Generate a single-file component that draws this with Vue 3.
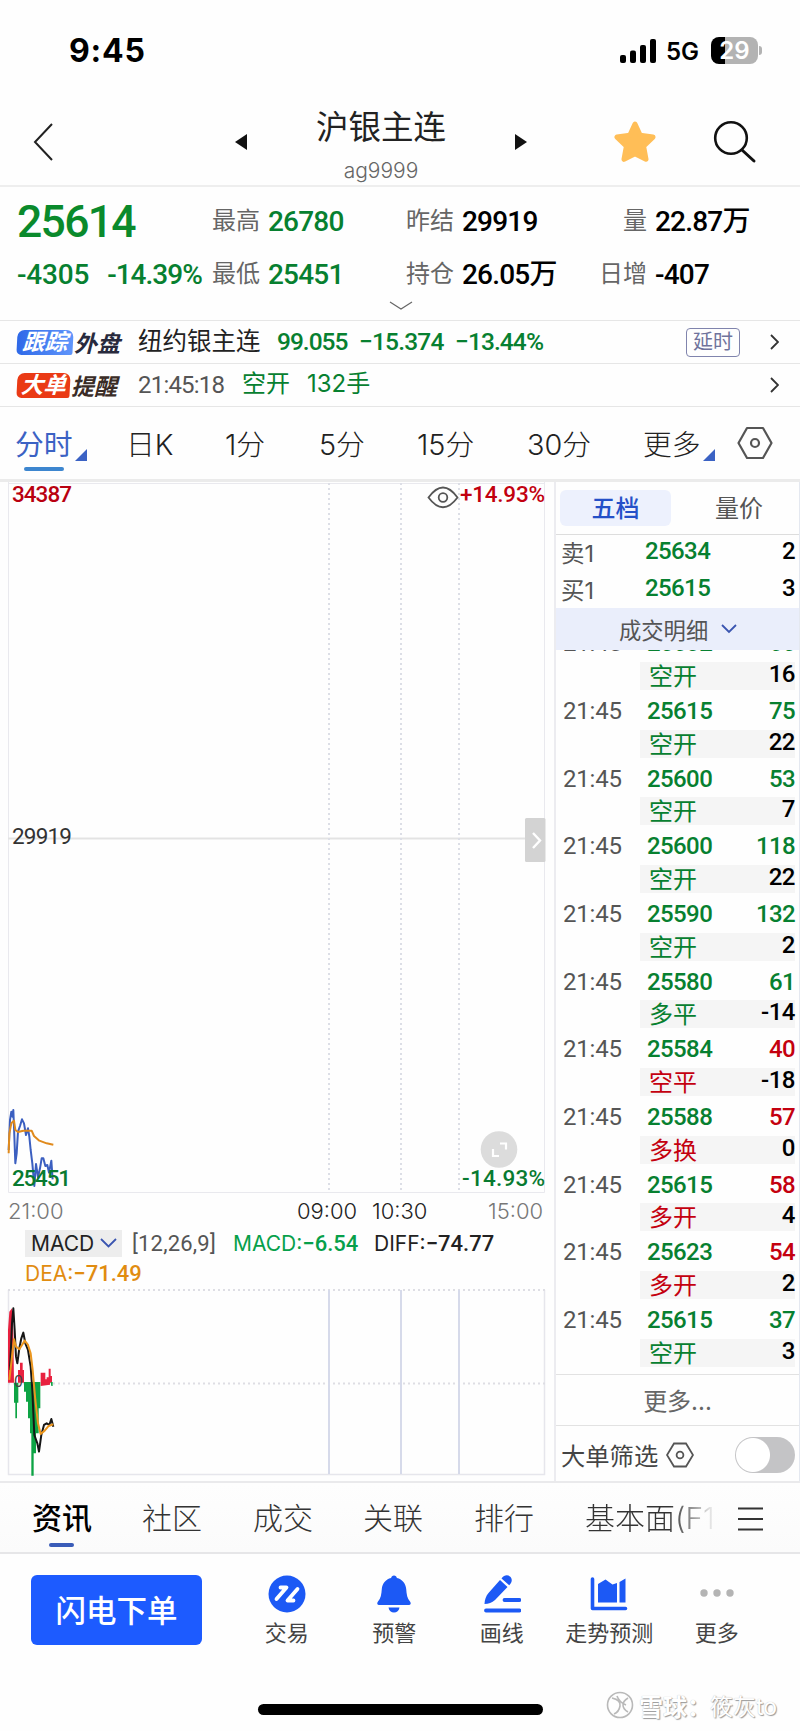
<template>
  <div class="page">
    <div class="status">
      <span class="clock">9:45</span>
      <svg class="signal" width="36" height="24" viewBox="0 0 36 24">
        <rect x="0" y="16" width="6" height="8" rx="2" />
        <rect x="10" y="11.5" width="6" height="12.5" rx="2" />
        <rect x="20" y="6" width="6" height="18" rx="2" />
        <rect x="30" y="0" width="6" height="24" rx="2" />
      </svg>
      <span class="net">5G</span>
      <div class="battery"><span>29</span></div>
      <i class="tip"></i>
    </div>

    <header class="header">
      <svg class="back" width="22" height="40" viewBox="0 0 22 40"><path d="M19 2L2 20l17 18" fill="none" stroke="#222" stroke-width="2" /></svg>
      <svg width="12" height="16" viewBox="0 0 12 16"><path d="M12 0v16L0 8z" fill="#111" /></svg>
      <div class="title">
        <h1>沪银主连</h1>
        <p>ag9999</p>
      </div>
      <svg width="12" height="16" viewBox="0 0 12 16"><path d="M0 0v16l12-8z" fill="#111" /></svg>
      <svg class="star" width="42" height="42" viewBox="0 0 42 42">
        <path d="M21 3l5.2 11.3 12.8 1.8-9.4 9 2.4 13.2-11-5.6-11 5.6 2.4-13.2-9.4-9 12.8-1.8z" fill="#ffbe57" stroke="#ffbe57" stroke-width="5" stroke-linejoin="round" />
      </svg>
      <svg class="search" width="44" height="44" viewBox="0 0 44 44">
        <circle cx="18" cy="18" r="15.8" fill="none" stroke="#111" stroke-width="2.6" />
        <path d="M29 30l12 11" stroke="#111" stroke-width="3" stroke-linecap="round" />
      </svg>
    </header>

    <section class="quote">
      <div class="quote-row">
        <b class="last num">25614</b>
        <span>最高</span><b class="num green">26780</b>
        <span>昨结</span><b class="num">29919</b>
        <span class="right">量</span><b class="num">22.87<i>万</i></b>
      </div>
      <div class="quote-row">
        <div class="change num green"><b>-4305</b><b>-14.39%</b></div>
        <span>最低</span><b class="num green">25451</b>
        <span>持仓</span><b class="num">26.05<i>万</i></b>
        <span class="right">日增</span><b class="num">-407</b>
      </div>
      <svg class="fold" width="24" height="9" viewBox="0 0 24 9"><path d="M1 1l11 7 11-7" fill="none" stroke="#666" stroke-width="1.2" /></svg>
    </section>

    <div class="notice outer">
      <span class="tag blue"><em>跟踪</em></span><em class="tag-name">外盘</em>
      <span class="contract">纽约银主连</span>
      <b class="num green n1">99.055</b>
      <b class="num green n2">−15.374</b>
      <b class="num green n3">−13.44%</b>
      <span class="delay">延时</span>
      <svg class="go" width="9" height="16" viewBox="0 0 9 16"><path d="M1 1l7 7-7 7" /></svg>
    </div>
    <div class="notice big">
      <span class="tag red"><em>大单</em></span><em class="tag-name brown">提醒</em>
      <span class="time num">21:45:18</span>
      <span class="green kind">空开</span>
      <span class="green lots">132手</span>
      <svg class="go" width="9" height="16" viewBox="0 0 9 16"><path d="M1 1l7 7-7 7" /></svg>
    </div>

    <nav class="periods">
      <span class="active">分时<i class="corner"></i></span>
      <span>日K</span>
      <span>1分</span>
      <span>5分</span>
      <span>15分</span>
      <span>30分</span>
      <span>更多<i class="corner"></i></span>
      <svg width="36" height="34" viewBox="0 0 36 34" fill="none" stroke="#555" stroke-width="2.2">
        <path d="M10 2h16l8.5 15L26 32H10L1.500 17z" stroke-linejoin="round" /><circle cx="18" cy="17" r="4" />
      </svg>
    </nav>

    <main class="main">
      <div class="left">
        <svg class="price-chart" width="553" height="712" viewBox="0 0 553 712">
          <path d="M8.500 0v710.500H544.500V0M8 1.500h537" fill="none" stroke="#e9e9ee" />
          <path d="M8 356.500h537" stroke="#e3e3e3" stroke-width="2" />
          <path v-for="x in gridX" :key="x" :d="`M${x} 1v709`" stroke="#dcdee6" stroke-width="2" stroke-dasharray="2 3" />
          <g transform="translate(0 608) scale(.3333)" fill="none" stroke-width="6" stroke-linejoin="round">
            <polyline :points="priceLine" stroke="#3b5fc0" />
            <polyline :points="avgLine" stroke="#e08a1c" />
          </g>
          <g class="chart-num">
            <text x="12" y="20" textLength="60" fill="#b90010">34387</text>
            <text x="460" y="20" textLength="85" fill="#c2000f">+14.93%</text>
            <text x="12" y="362" textLength="60" fill="#333" class="mid">29919</text>
            <text x="12" y="704" textLength="59" fill="#087a30">25451</text>
            <text x="462" y="704" textLength="83" fill="#087a30">-14.93%</text>
          </g>
          <g fill="none" stroke="#555" stroke-width="1.8">
            <path d="M428.500 15.500Q443-4.500 457.500 15.500Q443 35 428.500 15.500z" /><circle cx="443" cy="15.500" r="4.300" />
          </g>
          <rect x="525" y="336" width="20.500" height="44" rx="1.500" fill="#d3d3d3" />
          <path d="M533 351l7 7.500-7 7.500" fill="none" stroke="#fff" stroke-width="2.400" />
          <circle cx="499" cy="667.500" r="18.300" fill="#dcdcdc" />
          <path d="M500 661.500h6v6M493 667v7h6" fill="none" stroke="#fff" stroke-width="2.200" />
        </svg>
        <div class="axis">
          <span class="dim">21:00</span><span>09:00</span><span>10:30</span><span class="dim">15:00</span>
        </div>
        <div class="indicator">
          <span class="select">MACD
            <svg width="17" height="10" viewBox="0 0 17 10"><path d="M1 1l7.500 7.500L16 1" fill="none" stroke="#3a55b0" stroke-width="1.800" /></svg>
          </span>
          <span class="params num">[12,26,9]</span>
          <span class="macd">MACD:<b class="num">−6.54</b></span>
          <span class="diff">DIFF:<b class="num">−74.77</b></span>
        </div>
        <div class="dea">DEA:<b class="num">−71.49</b></div>
        <svg class="macd-chart" width="553" height="191" viewBox="0 0 553 191">
          <path d="M8.500 3v184.500H544.500V3" fill="none" stroke="#e6e6ec" stroke-width="1.500" />
          <path d="M8 3h537M8 96.500h537" stroke="#dedee4" stroke-width="2" stroke-dasharray="2 3" />
          <path v-for="x in gridX" :key="x" :d="`M${x} 3v184`" stroke="#d6daea" stroke-width="2" />
          <g transform="translate(0 -197) scale(.3333)" stroke-linejoin="round">
            <path d="M24 878V720l4-55 8-10 4 75 2 148zM54 878v-38h6v-22h8v22h4v38zM122 888v-40h14v20h4v-6h6v-26h6v22h4v20h-6v6z" fill="#e8213f" />
            <path d="M42 878v60h4v47h5v-47h4v-60zM72 876v29h6v30h6v50h6v45h4v127h7v-67h7v-60h8v-75h5v-79zM152 876h6v12h-4z" fill="#0da344" />
            <polyline :points="diffLine" fill="none" stroke="#161616" stroke-width="6" />
            <polyline :points="deaLine" fill="none" stroke="#eb961e" stroke-width="6" />
          </g>
          <text x="14" y="100" class="zero">0</text>
        </svg>
      </div>

      <aside class="side">
        <div class="side-tabs"><span class="on">五档</span><span>量价</span></div>
        <div class="book"><span>卖1</span><b class="num green">25634</b><b class="num">2</b></div>
        <div class="book"><span>买1</span><b class="num green">25615</b><b class="num">3</b></div>
        <div class="detail-title">
          成交明细
          <svg width="16" height="10" viewBox="0 0 16 10"><path d="M1 1l7 7 7-7" fill="none" stroke="#3a55b0" stroke-width="1.800" /></svg>
        </div>
        <div class="ticks">
          <div v-for="(t, i) in ticks" :key="i" class="tick">
            <div class="deal num">
              <span>21:45</span><b class="green">{{ t.price }}</b><b :class="t.side">{{ t.vol }}</b>
            </div>
            <div class="kind-row"><span :class="t.color">{{ t.kind }}</span><b class="num">{{ t.diff }}</b></div>
          </div>
        </div>
        <div class="more">更多...</div>
        <div class="filter">
          <span>大单筛选</span>
          <svg width="28" height="26" viewBox="0 0 28 26" fill="none" stroke="#555" stroke-width="1.800">
            <path d="M8 1.500h12L27 13l-7 11.500H8L1 13z" /><circle cx="14" cy="13" r="3.400" />
          </svg>
          <i class="switch"></i>
        </div>
      </aside>
    </main>

    <nav class="tabs">
      <span class="active">资讯</span>
      <span>社区</span>
      <span>成交</span>
      <span>关联</span>
      <span>排行</span>
      <span class="fade">基本面(F1</span>
      <svg width="26" height="24" viewBox="0 0 26 24"><path d="M0 1.500h25M0 12h25M0 22.500h25" stroke="#333" stroke-width="2" /></svg>
    </nav>

    <footer class="footer">
      <button>闪电下单</button>
      <div class="tool">
        <svg width="38" height="38" viewBox="0 0 38 38">
          <circle cx="19" cy="19" r="18.500" fill="#1c59f5" />
          <path d="M8.500 24l10-11.500h-6M29.500 14l-10 11.500h6" fill="none" stroke="#fff" stroke-width="3.800" stroke-linecap="round" stroke-linejoin="round" />
        </svg>
        <span>交易</span>
      </div>
      <div class="tool">
        <svg width="38" height="38" viewBox="0 0 38 38" fill="#1c59f5">
          <path d="M19 .5c1.600 0 2.600 1 2.900 2.400 5.600 1.300 8.800 5.600 9.300 11.100.4 5.500 1 9.500 3.800 12.500 1.500 2 .6 3.500-1.500 3.500h-29c-2.100 0-3-1.500-1.500-3.500C5.800 23.500 6.400 19.500 6.800 14c.5-5.500 3.700-9.800 9.300-11.100C16.400 1.500 17.400.5 19 .5zM13.500 32.500h11c-.5 3.300-2.700 5-5.500 5s-5-1.700-5.500-5z" />
        </svg>
        <span>预警</span>
      </div>
      <div class="tool">
        <svg width="38" height="38" viewBox="0 0 38 38" fill="#1c59f5">
          <path d="M17 5l7.500 7L12 25c-3 2.800-6.500 4-10.500 4 .2-4.500 1.500-8 4-11zM18.500 3.500c2.500-3.500 6-4.200 8.500-2 2.600 2.400 2.300 5.500-.8 8.800z" />
          <path d="M21.500 25h15M3 35.500h33.500" stroke="#1c59f5" stroke-width="3.800" stroke-linecap="round" />
        </svg>
        <span>画线</span>
      </div>
      <div class="tool">
        <svg width="38" height="38" viewBox="0 0 38 38" fill="#1c59f5">
          <path d="M2.500 4v29.500h33" fill="none" stroke="#1c59f5" stroke-width="3.600" stroke-linecap="round" stroke-linejoin="round" />
          <path d="M8 9l7.500-4.500 7 5L27 8v19.500H8zM29.500 7l6-3.500v24h-6z" />
        </svg>
        <span>走势预测</span>
      </div>
      <div class="tool">
        <svg width="38" height="38" viewBox="0 0 38 38" fill="#b4b4b4">
          <circle cx="6" cy="18" r="3.700" /><circle cx="19" cy="18" r="3.700" /><circle cx="32" cy="18" r="3.700" />
        </svg>
        <span>更多</span>
      </div>
    </footer>

    <div class="bottom">
      <i class="home-bar"></i>
      <div class="watermark">
        <svg width="28" height="28" viewBox="0 0 28 28" fill="none" stroke="#b9b9b9" stroke-width="1.600">
          <circle cx="14" cy="14" r="12.500" />
          <path d="M6 7q9 2 8 8t-6 8M22 7q-5 3-5 7t5 7M11 5q2 6 9 9" />
        </svg>
        <span class="brand">雪球：</span><span>筱灰to</span>
      </div>
    </div>
  </div>
</template>

<script setup>
const gridX = [329, 401, 459]

const priceLine = '26,180 30,90 34,65 37,80 40,60 42,110 46,220 50,190 54,125 60,108 66,88 72,100 78,135 84,115 88,140 92,180 97,220 103,288 108,222 114,262 120,235 125,205 130,205 136,228 142,225 147,248 154,212 158,268'
const avgLine = '26,190 28,130 34,100 42,92 46,120 54,126 70,122 95,122 102,138 118,152 140,160 160,164'
const diffLine = '30,840 36,700 40,655 44,720 48,800 52,820 58,775 64,745 70,728 76,760 84,780 92,830 97,900 103,1035 112,1060 117,1085 124,1035 132,1005 140,1000 148,1005 154,987 160,1010'
const deaLine = '28,870 36,800 42,748 48,770 58,778 66,765 74,752 84,765 92,790 98,840 106,930 114,1000 122,1032 134,1022 146,1008 160,1003'

// precio, volumen, color del volumen, tipo, color del tipo, diferencia
const ticks = [
  [25602, 66, 'green', '空开', 'green', 16],
  [25615, 75, 'green', '空开', 'green', 22],
  [25600, 53, 'green', '空开', 'green', 7],
  [25600, 118, 'green', '空开', 'green', 22],
  [25590, 132, 'green', '空开', 'green', 2],
  [25580, 61, 'green', '多平', 'green', -14],
  [25584, 40, 'crimson', '空平', 'crimson', -18],
  [25588, 57, 'crimson', '多换', 'crimson', 0],
  [25615, 58, 'crimson', '多开', 'crimson', 4],
  [25623, 54, 'crimson', '多开', 'crimson', 2],
  [25615, 37, 'green', '空开', 'green', 3]
].map(([price, vol, side, kind, color, diff]) => ({ price, vol, side, kind, color, diff }))
</script>

<style>
body {
  margin: 0;
  background: #fff;
}
</style>

<style scoped>
.page {
  width: 800px;
  height: 1731px;
  overflow: hidden;
  background: #fefefe;
  color: #222;
  font-family: Inter, "Noto Sans CJK SC", sans-serif;
  font-weight: 400;
}
.page * {
  box-sizing: border-box;
}
svg {
  display: block;
  flex: none;
}
span, b, em, h1 {
  white-space: nowrap;
}
i {
  font-style: normal;
}
.num {
  font-family: Roboto, "Noto Sans CJK SC", sans-serif;
  font-weight: 500;
}
.num b, b {
  font-weight: 500;
}
.green {
  color: #078030;
}
.crimson {
  color: #c4000f;
}

/* barra de estado */
.status {
  display: flex;
  align-items: center;
  height: 101px;
  padding-left: 69px;
  color: #000;
}
.clock {
  flex: none;
  width: 551px;
  font-size: 32px;
  font-weight: 700;
  line-height: 40px;
  letter-spacing: 0.800px;
}
.net {
  flex: none;
  width: 45px;
  padding: 2px 0 0 10px;
  font-size: 24px;
  font-weight: 600;
}
.battery {
  flex: none;
  width: 47px;
  height: 27px;
  margin-left: 10px;
  border-radius: 8px;
  background: linear-gradient(90deg, #000 14px, #b3b3b3 14px);
  color: #fff;
  font-size: 24px;
  font-weight: 600;
  line-height: 27px;
  text-align: center;
}
.tip {
  width: 3px;
  height: 9px;
  margin-left: 1px;
  border-radius: 0 3px 3px 0;
  background: #b3b3b3;
}

.header {
  display: flex;
  align-items: center;
  height: 86px;
  padding: 0 44px 2px 33px;
  border-bottom: 2px solid #eee;
}
.back {
  margin-right: 180px;
}
.title {
  flex: none;
  width: 268px;
  text-align: center;
}
.title h1 {
  margin: 12px 0 0;
  font-size: 32.500px;
  font-weight: 400;
  line-height: 44px;
}
.title p {
  margin: 0;
  color: #666;
  font-size: 21px;
  font-weight: 300;
  line-height: 41px;
}
.star {
  margin-left: 87px;
}
.search {
  margin-left: 57px;
}

.quote {
  height: 134px;
  padding: 7px 0 0 17px;
  border-bottom: 1px solid #e6e6e6;
}
.quote-row {
  display: grid;
  grid-template-columns: 195px 56px 138px 56px 129px 64px 1fr;
  height: 53px;
  color: #000;
  line-height: 55px;
}
.quote-row span {
  color: #666;
  font-size: 24px;
  line-height: 53px;
}
.quote-row > span.right {
  padding-right: 8px;
  text-align: right;
}
.quote-row > b {
  font-size: 28px;
  letter-spacing: -0.8px;
}
.quote-row > b.last {
  color: #0a8a2c;
  font-size: 44.500px;
  line-height: 56px;
  letter-spacing: -1.700px;
}
.change {
  display: flex;
  gap: 18px;
  font-size: 28px;
  letter-spacing: -0.200px;
}
.change b + b {
  letter-spacing: -1px;
}
.fold {
  margin: 0 auto;
  position: relative;
  left: -8px;
  top: 1px;
}

.notice {
  display: flex;
  align-items: center;
  height: 43px;
  padding-left: 17px;
  border-bottom: 1px solid #e6e6e6;
}
.notice > * {
  flex: none;
}
.tag {
  width: 56px;
  height: 25px;
  border-radius: 7px 7px 2px 5px;
  color: #fff;
  font-size: 22.500px;
  line-height: 24px;
  text-align: center;
  font-weight: 700;
  transform: skewX(-3deg);
}
.tag.blue {
  background: linear-gradient(90deg, #2f69e8, #5f95fb);
}
.tag.red {
  width: 53px;
  background: #ea3a15;
}
.tag-name {
  width: 65px;
  padding-left: 1px;
  color: #282a3d;
  font-size: 23px;
  font-weight: 700;
}
.tag-name.brown {
  width: 68px;
  color: #3a2c26;
}
.contract {
  width: 139px;
  height: 42px;
  color: #222;
  font-size: 24.500px;
  line-height: 40px;
}
.notice b {
  height: 40px;
  font-size: 24.500px;
  line-height: 39px;
}
.n1 {
  width: 82px;
  letter-spacing: -1px;
}
.n2 {
  width: 96px;
  letter-spacing: -0.800px;
}
.n3 {
  width: 231px;
  letter-spacing: -0.900px;
}
.delay {
  width: 54px;
  height: 29px;
  border: 1.500px solid #8084ad;
  border-radius: 4px;
  color: #6f739c;
  font-size: 20px;
  line-height: 26px;
  text-align: center;
}
.go {
  fill: none;
  stroke: #333;
  stroke-width: 1.800;
  margin-left: 30px;
}
.big .go {
  margin-left: auto;
  margin-right: 21px;
}
.time {
  width: 104px;
  color: #555;
  font-size: 24px;
  font-weight: 400;
  letter-spacing: -0.800px;
}
.kind, .lots {
  height: 42px;
  font-size: 24px;
  line-height: 39px;
}
.kind {
  width: 65px;
}

.periods {
  display: grid;
  grid-template-columns: 111px 99px 94px 98px 110px 116px 94px 1fr;
  align-items: center;
  height: 75px;
  padding: 0 0 3px 15px;
  border-bottom: 3px solid #ebebeb;
  font-size: 28.800px;
  font-weight: 300;
}
.periods span {
  display: flex;
  height: 72px;
  line-height: 75px;
}
.periods .active {
  position: relative;
  color: #3b62c4;
  font-weight: 400;
}
.periods .active::after {
  content: "";
  position: absolute;
  left: 9px;
  bottom: 8px;
  width: 40px;
  height: 4px;
  border-radius: 2px;
  background: #3d86cf;
}
.corner {
  align-self: flex-end;
  margin: 0 0 18px 2px;
  border-left: 12px solid transparent;
  border-bottom: 12px solid #3b62c4;
}

.main {
  display: flex;
  height: 1001px;
  border-bottom: 2px solid #eaeaec;
}
.left {
  flex: none;
  width: 554px;
}
.chart-num {
  font: 500 22.500px Roboto, sans-serif;
}
.chart-num .mid {
  font-weight: 400;
}
.axis {
  display: grid;
  grid-template-columns: 289px 75px 116px 1fr;
  padding-left: 8px;
  height: 35px;
  font-size: 22px;
  font-weight: 300;
  line-height: 35px;
}
.dim {
  color: #777;
}
.indicator {
  display: grid;
  grid-template-columns: 107px 101px 141px 1fr;
  align-items: center;
  height: 28px;
  padding-left: 25px;
  font-size: 21px;
}
.select {
  display: flex;
  align-items: center;
  justify-content: space-between;
  width: 97px;
  height: 27px;
  padding: 0 5px 0 6px;
  background: #ededed;
}
.params {
  color: #555;
  font-size: 22px;
  font-weight: 400;
  letter-spacing: 0.200px;
}
.indicator .num, .dea .num {
  font-size: 22px;
}
.macd {
  color: #07a04a;
}
.dea {
  height: 30px;
  padding-left: 25px;
  color: #e18c10;
  font-size: 21px;
  line-height: 33px;
}
.zero {
  font: 16px "Noto Sans CJK SC", sans-serif;
  fill: #444;
}

.side {
  flex: none;
  width: 246px;
  border-left: 2px solid #ececf0;
  border-right: 1px solid #e4e8f0;
}
.side-tabs {
  display: flex;
  align-items: center;
  height: 53px;
  padding-left: 4px;
  border-bottom: 1px solid #ddd;
  color: #555;
  font-size: 24px;
}
.side-tabs span {
  flex: none;
  width: 111px;
  height: 36px;
  border-radius: 6px;
  line-height: 38px;
  text-align: center;
}
.side-tabs span + span {
  width: 136px;
}
.side-tabs .on {
  background: #edf1fd;
  color: #2450c8;
  font-weight: 500;
}
.book {
  display: grid;
  grid-template-columns: 84px 1fr auto;
  height: 37px;
  padding: 0 4px 0 5px;
  color: #000;
  font-size: 24px;
  line-height: 33px;
}
.book span {
  color: #555;
  font-size: 23.500px;
  line-height: 38px;
}
.book b {
  letter-spacing: -0.600px;
}
.detail-title {
  display: flex;
  align-items: center;
  gap: 13px;
  height: 42px;
  margin-top: -1px;
  padding: 0 0 1px 63px;
  background: #eaeefb;
  color: #555;
  font-size: 22.300px;
}
.ticks {
  height: 725px;
  overflow: hidden;
  border-bottom: 1px solid #e2e2e2;
}
.tick:first-child {
  margin-top: -27.700px;
}
.deal {
  display: grid;
  grid-template-columns: 84px 1fr auto;
  height: 39.670px;
  padding: 0 4px 0 7px;
  font-size: 24px;
  line-height: 43px;
  letter-spacing: -0.600px;
}
.deal span {
  color: #555;
  font-weight: 400;
  letter-spacing: -0.200px;
}
.kind-row {
  display: flex;
  justify-content: space-between;
  height: 28px;
  margin: 0 4px 0 84px;
  padding-left: 9px;
  background: #f5f5f5;
  font-size: 24px;
  line-height: 30px;
}
.kind-row b {
  color: #000;
  line-height: 24px;
  letter-spacing: -0.500px;
}
.more {
  height: 51px;
  border-bottom: 1px solid #e2e2e2;
  color: #666;
  font-size: 24px;
  line-height: 54px;
  text-align: center;
}
.filter {
  display: flex;
  align-items: center;
  height: 56px;
  padding: 1px 4px 0 5px;
  color: #444;
  font-size: 24.300px;
}
.filter svg {
  margin-left: 8px;
}
.switch {
  width: 60px;
  height: 36px;
  margin-left: auto;
  border-radius: 18px;
  background: radial-gradient(circle at 18px 18px, #fff 16.500px, #c4c4c6 17.500px);
}

.tabs {
  display: grid;
  grid-template-columns: 110px 111px 110px 111px 111px 153px 1fr;
  align-items: center;
  height: 71px;
  padding-left: 32px;
  border-bottom: 2px solid #e6e6e8;
  background: linear-gradient(#fefefe, #fbfbfb);
  color: #333;
  font-size: 30px;
  font-weight: 300;
}
.tabs span {
  height: 71px;
  line-height: 71px;
}
.tabs .active {
  position: relative;
  color: #000;
  font-weight: 500;
}
.tabs .active::after {
  content: "";
  position: absolute;
  left: 17px;
  bottom: 7px;
  width: 25px;
  height: 4px;
  border-radius: 2px;
  background: #3a5cb8;
}
.tabs .fade {
  width: 134px;
  background: linear-gradient(90deg, #333 84px, #fff 132px);
  background-clip: text;
  color: transparent;
}

.footer {
  display: flex;
  height: 115px;
  padding: 21px 0 0 31px;
}
.footer button {
  flex: none;
  width: 171px;
  height: 70px;
  margin-right: 31px;
  padding: 0;
  border: 0;
  border-radius: 6px;
  background: #1d5bff;
  color: #fff;
  font: 500 30.500px/71px Inter, "Noto Sans CJK SC", sans-serif;
}
.tool {
  display: flex;
  flex: none;
  flex-direction: column;
  align-items: center;
  width: 107.500px;
  color: #444;
  font-size: 22px;
}
.tool span {
  line-height: 40px;
}

.bottom {
  display: flex;
  align-items: flex-start;
  padding-left: 258px;
}
.home-bar {
  flex: none;
  width: 285px;
  height: 11px;
  margin-top: 35px;
  border-radius: 6px;
  background: #000;
}
.watermark {
  display: flex;
  align-items: center;
  height: 34px;
  margin: 19px 0 0 63px;
  color: #fff;
  font-size: 23px;
  text-shadow: 1px 1px 1px #999, 0 0 1px #bbb;
}
.brand {
  width: 76px;
  padding-left: 5px;
  font-size: 24px;
  font-weight: 700;
}
</style>
